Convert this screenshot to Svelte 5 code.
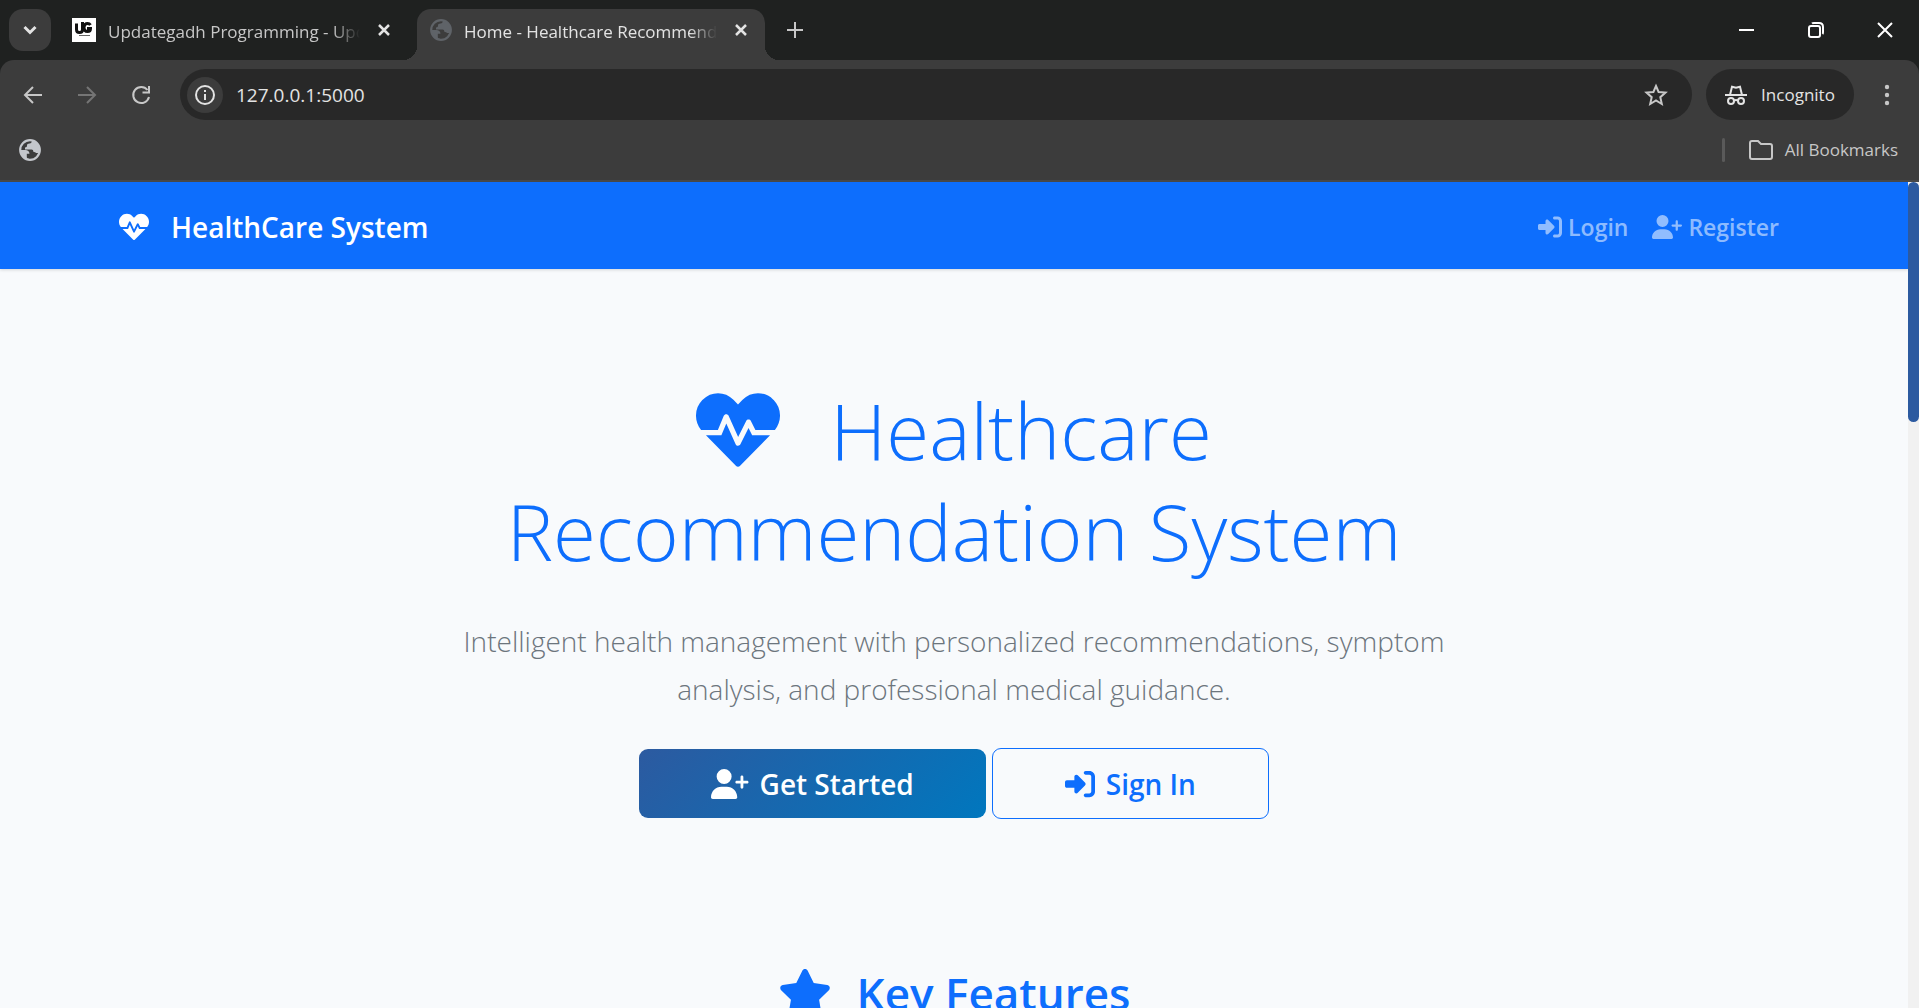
<script>
  const tabs = [
    { title: 'Updategadh Programming - Updategadh', active: false },
    { title: 'Home - Healthcare Recommendation System', active: true },
  ];
  const heart =
    'M320.2 243.8l-49.7 99.4c-6 12.1-23.4 11.7-28.9-.6l-56.9-126.3-30 71.7H60.6l182.5 186.5c7.1 7.3 18.6 7.3 25.7 0L451.4 288H342.3l-22.1-44.2zM473.7 73.9l-2.4-2.5c-51.5-52.6-135.8-52.6-187.4 0L256 100l-27.9-28.5c-51.5-52.7-135.9-52.7-187.4 0l-2.4 2.4C-10.4 123.7-12.5 203 31 256h102.4l35.9-86.2c5.4-12.9 23.6-13.2 29.4-.4l58.2 129.3 49-97.9c5.9-11.8 22.7-11.8 28.6 0l27.6 55.2H481c43.5-53 41.4-132.3-7.3-182.1z';
  const userPlus =
    'M96 128a128 128 0 1 1 256 0A128 128 0 1 1 96 128zM0 482.3C0 383.8 79.8 304 178.3 304h91.4C368.2 304 448 383.8 448 482.3c0 16.4-13.3 29.7-29.7 29.7H29.7C13.3 512 0 498.7 0 482.3zM504 312V248H440c-13.3 0-24-10.7-24-24s10.7-24 24-24h64V136c0-13.3 10.7-24 24-24s24 10.7 24 24v64h64c13.3 0 24 10.7 24 24s-10.7 24-24 24H552v64c0 13.3-10.7 24-24 24s-24-10.7-24-24z';
  const signIn =
    'M217.9 105.9L340.7 228.7c7.2 7.2 11.3 17.1 11.3 27.3s-4.1 20.1-11.3 27.3L217.9 406.1c-6.4 6.4-15 9.9-24 9.9c-18.7 0-33.9-15.2-33.9-33.9l0-62.1L32 320c-17.7 0-32-14.3-32-32l0-64c0-17.7 14.3-32 32-32l128 0 0-62.1c0-18.7 15.2-33.9 33.9-33.9c9 0 17.6 3.6 24 9.9zM352 416l64 0c17.7 0 32-14.3 32-32l0-256c0-17.7-14.3-32-32-32l-64 0c-17.7 0-32-14.3-32-32s14.3-32 32-32l64 0c53 0 96 43 96 96l0 256c0 53-43 96-96 96l-64 0c-17.7 0-32-14.3-32-32s14.3-32 32-32z';
  const star =
    'M316.9 18C311.6 7 300.4 0 288.1 0s-23.4 7-28.8 18L195 150.3 51.4 171.5c-12 1.8-22 10.2-25.7 21.7s-.7 24.2 7.9 32.7L137.8 329 113.2 474.7c-2 12 3 24.2 12.9 31.3s23 8 33.8 2.3l128.3-68.5 128.3 68.5c10.8 5.7 23.9 4.9 33.8-2.3s14.9-19.3 12.9-31.3L438.5 329 542.7 225.9c8.6-8.5 11.7-21.2 7.9-32.7s-13.7-19.9-25.7-21.7L381.2 150.3 316.9 18z';
  let address = $state('127.0.0.1:5000');
</script>

{#snippet globe()}
  <svg class="globe" viewBox="0 0 22 22" aria-hidden="true">
    <circle cx="11" cy="11" r="9.800" fill="none" stroke="currentColor" stroke-width="2.200" />
    <path fill="currentColor" d="M13 1.500c0 1.800-.8 2.800-2.500 2.900-1.700.1-2.600.8-2.500 2.200.1 1.200-.6 1.900-2 1.900v2h6.500c1.300 0 1.800.8 1.800 2.200 1.400.1 2.200.5 2.700 1.300H21C22 8 19.500 2.500 13 1.500zM1.500 11h4.700c2.600 0 4.300 1.300 4.300 3.800H7.800v3.200c0 1 .7 1.700 2 1.700v1.300C5 20.500 1.500 16.500 1.500 11z" />
  </svg>
{/snippet}

<div class="window">
  <header class="chrome">
    <div class="tabstrip">
      <button class="tab-search" aria-label="Search tabs">
        <svg width="14" height="10" viewBox="0 0 14 10"><path d="M1.500 2l5.500 5.500L12.500 2" fill="none" stroke="#e3e3e3" stroke-width="3" /></svg>
      </button>
      {#each tabs as tab}
        <div class="tab" class:active={tab.active}>
          {#if tab.active}
            {@render globe()}
          {:else}
            <svg class="favicon" viewBox="0 0 24 24" aria-hidden="true">
              <path fill="#fff" d="M0 0h24v24H0z" />
              <path fill="none" stroke="#111" stroke-width="3" d="M4.500 5.500v6q0 3 3 3t3-3V4M18.500 7q-1-1.500-3-1.500-3 0-3.500 3.500 0 4.500 3.500 4.500 3 0 3-3H15" />
              <path stroke="#666" d="M7 17.500h11" />
            </svg>
          {/if}
          <span class="tab-title">{tab.title}</span>
          <button class="close" aria-label="Close tab">
            <svg width="14" height="14" viewBox="0 0 14 14"><path d="M2 2l10 10M12 2L2 12" stroke="#e3e3e3" stroke-width="2.500" /></svg>
          </button>
        </div>
      {/each}
      <button class="new-tab" aria-label="New tab">
        <svg width="16" height="16" viewBox="0 0 16 16"><path d="M8 0v16M0 8h16" stroke="#c7c7c7" stroke-width="2" /></svg>
      </button>
      <div class="window-controls">
        <button aria-label="Minimize"><svg width="16" height="16" viewBox="0 0 16 16"><path d="M0 8h15" stroke="#fff" stroke-width="2" /></svg></button>
        <button aria-label="Restore"><svg width="16" height="16" viewBox="0 0 16 16" fill="none" stroke="#fff" stroke-width="2"><rect x="1" y="4" width="11" height="11" rx="2" /><path d="M4 1.500Q4.500 1 6 1h5q4 0 4 4v5q0 1.500-.5 2" /></svg></button>
        <button aria-label="Close"><svg width="16" height="16" viewBox="0 0 16 16"><path d="M1 1l14 14M15 1L1 15" stroke="#fff" stroke-width="2" /></svg></button>
      </div>
    </div>

    <div class="toolbar">
      <button class="nav" aria-label="Back"><svg width="20" height="20" viewBox="0 0 20 20" fill="none" stroke="#c7c7c7" stroke-width="2"><path d="M19 10H2M10 2l-8 8 8 8" /></svg></button>
      <button class="nav" aria-label="Forward" disabled><svg width="20" height="20" viewBox="0 0 20 20" fill="none" stroke="#757575" stroke-width="2"><path d="M1 10h17M10 2l8 8-8 8" /></svg></button>
      <button class="nav" aria-label="Reload"><svg width="20" height="20" viewBox="0 0 20 20" fill="none" stroke="#c7c7c7" stroke-width="2"><path d="M16.500 5A8 8 0 1 0 18 12M18 1v6.500h-6.500" /></svg></button>
      <div class="omnibox">
        <button class="info" aria-label="View site information">
          <svg width="20" height="20" viewBox="0 0 20 20"><circle cx="10" cy="10" r="9" fill="none" stroke="#e3e3e3" stroke-width="2" /><path d="M10 9v6M10 5v2" stroke="#e3e3e3" stroke-width="2" /></svg>
        </button>
        <input aria-label="Address" bind:value={address} />
        <button class="bookmark" aria-label="Bookmark this tab">
          <svg width="24" height="24" viewBox="0 0 24 24"><path d="M12 3l2.600 6 6.900.6-5.200 4.600 1.500 6.800-5.800-3.600L6.200 21l1.500-6.800-5.200-4.600L9.400 9z" fill="none" stroke="#c7c7c7" stroke-width="2" /></svg>
        </button>
      </div>
      <button class="incognito">
        <svg width="22" height="20" viewBox="0 0 22 20" aria-hidden="true"><path fill="none" stroke="#e3e3e3" stroke-width="2" d="M0 10h22M5 10l2-8.200 4 1 4-1 2 8.200" /><g fill="none" stroke="#e3e3e3" stroke-width="2"><circle cx="6" cy="16" r="3" /><circle cx="16" cy="16" r="3" /><path d="M9 15.500q2-1 4 0" /></g></svg>
        Incognito
      </button>
      <button class="menu" aria-label="Menu">
        <svg width="6" height="22" viewBox="0 0 6 22" fill="#c7c7c7"><circle cx="3" cy="3" r="2.200" /><circle cx="3" cy="11" r="2.200" /><circle cx="3" cy="19" r="2.200" /></svg>
      </button>
    </div>

    <div class="bookmarks">
      <button class="site" aria-label="Bookmark">{@render globe()}</button>
      <span class="divider"></span>
      <button class="all">
        <svg width="24" height="20" viewBox="0 0 24 20" aria-hidden="true"><path d="M1 3q0-2 2-2h6l3 3h9q2 0 2 2v11q0 2-2 2H3q-2 0-2-2z" fill="none" stroke="#c7c7c7" stroke-width="2" /></svg>
        All Bookmarks
      </button>
    </div>
  </header>

  <div class="viewport">
    <div class="page">
      <nav class="navbar">
        <a class="brand" href="#home">
          <svg viewBox="0 0 512 512" aria-hidden="true"><path fill="currentColor" d={heart} /></svg>
          HealthCare System
        </a>
        <div class="links">
          <a href="#login"><svg viewBox="0 0 512 512" aria-hidden="true"><path fill="currentColor" d={signIn} /></svg>Login</a>
          <a href="#register"><svg viewBox="0 0 640 512" aria-hidden="true"><path fill="currentColor" d={userPlus} /></svg>Register</a>
        </div>
      </nav>
      <main>
        <section class="hero">
          <h1><svg viewBox="0 0 512 512" aria-hidden="true"><path fill="currentColor" d={heart} /></svg>Healthcare Recommendation System</h1>
          <p>Intelligent health management with personalized recommendations, symptom analysis, and professional medical guidance.</p>
          <div class="actions">
            <a class="btn primary" href="#register"><svg viewBox="0 0 640 512" aria-hidden="true"><path fill="currentColor" d={userPlus} /></svg>Get Started</a>
            <a class="btn outline" href="#login"><svg viewBox="0 0 512 512" aria-hidden="true"><path fill="currentColor" d={signIn} /></svg>Sign In</a>
          </div>
        </section>
        <h2><svg viewBox="0 0 576 512" aria-hidden="true"><path fill="currentColor" d={star} /></svg>Key Features</h2>
      </main>
    </div>
    <div class="scrollbar"><div class="thumb"></div></div>
  </div>
</div>

<style>
  :global(body) { margin: 0; background: #f8fafc; }
  .window, .window :global(*) { box-sizing: border-box; }
  .window { height: 100vh; display: flex; flex-direction: column; overflow: hidden; font-family: "Open Sans", "Noto Sans", sans-serif; }
  button { border: 0; padding: 0; background: none; font: inherit; color: inherit; display: flex; align-items: center; justify-content: center; flex: none; }
  svg { display: block; flex: none; }
  a { text-decoration: none; }

  .chrome { background: #1f2120; color: #c7c7c7; font-size: 17px; flex: none; }
  .tabstrip { display: flex; height: 60px; padding: 9px 0 0 9px; }
  .tab-search { width: 42px; height: 42px; border-radius: 14px; background: #3c3c3c; }
  .tab { display: flex; align-items: center; width: 348px; height: 51px; padding: 0 5px 9px 21px; }
  .tab.active { position: relative; margin-left: 18px; padding-left: 13px; padding-right: 14px; background: #3c3c3c; border-radius: 14px 14px 0 0; color: #e3e3e3; }
  .tab.active::before, .tab.active::after { content: ""; position: absolute; bottom: 0; width: 14px; height: 14px; }
  .tab.active::before { right: 100%; background: radial-gradient(circle at 0 0, transparent 14px, #3c3c3c 14px); }
  .tab.active::after { left: 100%; background: radial-gradient(circle at 100% 0, transparent 14px, #3c3c3c 14px); }
  .favicon { width: 24px; height: 24px; }
  .globe { width: 22px; height: 22px; }
  .tab .globe { color: #5f6368; }
  .tab-title { flex: 1; min-width: 0; margin-left: 12px; padding-top: 2px; overflow: hidden; white-space: nowrap; -webkit-mask-image: linear-gradient(to left, transparent, #000 28px); mask-image: linear-gradient(to left, transparent, #000 28px); }
  .close { width: 20px; height: 20px; margin-left: 14px; }
  .new-tab { width: 42px; height: 42px; margin-left: 9px; }
  .window-controls { display: flex; margin-left: auto; height: 42px; }
  .window-controls button { width: 69px; }

  .toolbar { display: flex; align-items: center; height: 69px; padding: 0 14px 0 6px; background: #3c3c3c; border-radius: 14px 14px 0 0; }
  .nav { width: 54px; height: 42px; }
  .omnibox { display: flex; align-items: center; flex: 1; height: 51px; margin: 0 14px 0 12px; padding: 0 24px 0 7px; border-radius: 26px; background: #282828; }
  .info { width: 36px; height: 36px; border-radius: 50%; background: #3c3c3c; }
  .omnibox input { flex: 1; min-width: 0; margin-left: 13px; padding: 0; border: 0; background: none; color: #e3e3e3; font: inherit; font-size: 19px; }
  .incognito { gap: 14px; width: 148px; height: 51px; border-radius: 26px; background: #282828; color: #e3e3e3; }
  .menu { width: 36px; height: 42px; margin-left: 15px; }
  .bookmarks { display: flex; align-items: center; height: 53px; padding: 0 21px 10px 19px; background: #3c3c3c; border-bottom: 2px solid #484848; }
  .site { color: #c4c7cc; }
  .divider { width: 3px; height: 24px; margin-left: auto; margin-right: 24px; border-radius: 2px; background: #5a5a5a; }
  .all { gap: 12px; }

  .viewport { display: flex; flex: 1; min-height: 0; }
  .page { flex: 1; min-width: 0; overflow: hidden; background: #f8fafc; }
  .scrollbar { width: 11px; background: #f1f1f1; }
  .thumb { height: 29%; border-radius: 6px; background: #2c5aa0; }

  .navbar { display: flex; align-items: center; justify-content: space-between; height: 87px; padding: 2px 129px 0 119px; background: #0d6efd; box-shadow: 0 1px 3px rgba(0, 0, 0, 0.15); }
  .brand { display: flex; align-items: center; gap: 22px; color: #fff; font-size: 28px; font-weight: 600; }
  .brand svg { width: 30px; height: 30px; }
  .links { display: flex; gap: 24px; }
  .links a { display: flex; align-items: center; gap: 6px; color: rgba(255, 255, 255, 0.55); font-size: 23px; font-weight: 600; }
  .links svg { height: 24px; }

  .hero { display: flex; flex-direction: column; align-items: center; padding: 111px 24px 0; text-align: center; }
  h1 { max-width: 1080px; margin: 0; color: #0d6efd; font-size: 78px; line-height: 101px; font-weight: 300; }
  h1 svg { display: inline-block; width: 84px; height: 84px; margin-right: 50px; vertical-align: -12px; }
  .hero p { max-width: 1040px; margin: 35px 0 0; color: #6c757d; font-size: 28px; line-height: 48px; font-weight: 300; }
  .actions { display: flex; align-items: center; gap: 6px; margin-top: 35px; }
  .btn { display: flex; align-items: center; justify-content: center; gap: 11px; height: 69px; padding: 0 72px; border-radius: 9px; font-size: 28px; font-weight: 600; }
  .btn svg { height: 30px; }
  .primary { color: #fff; background: linear-gradient(135deg, #2c5aa0, #0077be); }
  .outline { height: 71px; color: #0d6efd; border: 1px solid #0d6efd; }
  h2 { display: flex; justify-content: center; align-items: center; gap: 25px; margin: 141px 0 0; color: #0d6efd; font-size: 44px; line-height: 66px; font-weight: 600; }
  h2 svg { height: 48px; }
</style>
